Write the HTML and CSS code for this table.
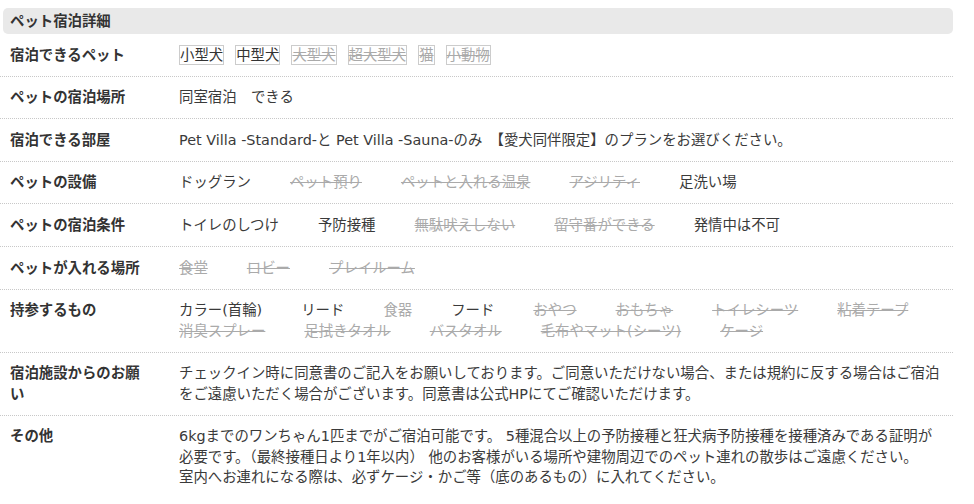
FILE: index.html
```html
<!DOCTYPE html>
<html lang="ja">
<head>
    <meta charset="UTF-8">
    <meta name="viewport" content="width=device-width, initial-scale=1.0">
    <title>ペット宿泊詳細</title>
    <link rel="stylesheet" href="styles.css">
</head>
<body>
    <div class="pet-detail">
        <h3 class="pet-title">ペット宿泊詳細</h3>

        <div class="pet-row">
            <div class="pet-label">宿泊できるペット</div>
            <div class="pet-value tags">
                <span class="tag">小型犬</span>
                <span class="tag">中型犬</span>
                <span class="tag off">大型犬</span>
                <span class="tag off">超大型犬</span>
                <span class="tag off">猫</span>
                <span class="tag off">小動物</span>
            </div>
        </div>

        <div class="pet-row">
            <div class="pet-label">ペットの宿泊場所</div>
            <div class="pet-value">同室宿泊　できる</div>
        </div>

        <div class="pet-row">
            <div class="pet-label">宿泊できる部屋</div>
            <div class="pet-value">Pet Villa -Standard-と Pet Villa -Sauna-のみ　【愛犬同伴限定】のプランをお選びください。</div>
        </div>

        <div class="pet-row">
            <div class="pet-label">ペットの設備</div>
            <div class="pet-value items">
                <span>ドッグラン</span>
                <span class="off">ペット預り</span>
                <span class="off">ペットと入れる温泉</span>
                <span class="off">アジリティ</span>
                <span>足洗い場</span>
            </div>
        </div>

        <div class="pet-row">
            <div class="pet-label">ペットの宿泊条件</div>
            <div class="pet-value items">
                <span>トイレのしつけ</span>
                <span>予防接種</span>
                <span class="off">無駄吠えしない</span>
                <span class="off">留守番ができる</span>
                <span>発情中は不可</span>
            </div>
        </div>

        <div class="pet-row">
            <div class="pet-label">ペットが入れる場所</div>
            <div class="pet-value items">
                <span class="off">食堂</span>
                <span class="off">ロビー</span>
                <span class="off">プレイルーム</span>
            </div>
        </div>

        <div class="pet-row">
            <div class="pet-label">持参するもの</div>
            <div class="pet-value items">
                <span>カラー(首輪)</span>
                <span>リード</span>
                <span class="off-plain">食器</span>
                <span>フード</span>
                <span class="off">おやつ</span>
                <span class="off">おもちゃ</span>
                <span class="off">トイレシーツ</span>
                <span class="off">粘着テープ</span>
                <span class="off">消臭スプレー</span>
                <span class="off">足拭きタオル</span>
                <span class="off">バスタオル</span>
                <span class="off">毛布やマット(シーツ)</span>
                <span class="off">ケージ</span>
            </div>
        </div>

        <div class="pet-row">
            <div class="pet-label">宿泊施設からのお願い</div>
            <div class="pet-value">チェックイン時に同意書のご記入をお願いしております。ご同意いただけない場合、または規約に反する場合はご宿泊をご遠慮いただく場合がございます。同意書は公式HPにてご確認いただけます。</div>
        </div>

        <div class="pet-row last">
            <div class="pet-label">その他</div>
            <div class="pet-value">6kgまでのワンちゃん1匹までがご宿泊可能です。 5種混合以上の予防接種と狂犬病予防接種を接種済みである証明が<br>必要です。（最終接種日より1年以内） 他のお客様がいる場所や建物周辺でのペット連れの散歩はご遠慮ください。<br>室内へお連れになる際は、必ずケージ・かご等（底のあるもの）に入れてください。</div>
        </div>
    </div>
</body>
</html>
```

FILE: styles.css
```css
body {
  margin: 0;
  padding-top: 8px;
  font-family: "DejaVu Sans", "Noto Sans CJK JP", sans-serif;
  font-size: 14.4px;
  color: #3a3a3a;
  background: #fff;
}
.pet-detail {
  width: 953px;
}
.pet-title {
  margin: 0 0 0 3px;
  height: 26px;
  line-height: 26px;
  padding-left: 7px;
  background-color: #e9e9e9;
  border-radius: 5px;
  font-size: 14.4px;
  font-weight: bold;
  color: #333;
}
.pet-row {
  display: grid;
  grid-template-columns: 169px 1fr;
  padding: 10.6px 5px 10.6px 10px;
  line-height: 20.4px;
  border-bottom: 1px dotted #c8c8c8;
}
.pet-row.last {
  border-bottom: none;
}
.pet-label {
  padding-right: 30px;
  font-weight: bold;
  color: #333;
}
.tags {
  display: flex;
  gap: 11px;
  align-items: center;
}
.tag {
  border: 1px solid #ccc;
  line-height: 18px;
  color: #333;
}
.items {
  display: flex;
  flex-wrap: wrap;
  column-gap: 39px;
}
.off {
  color: #aaa;
  text-decoration: line-through;
}
.off-plain {
  color: #aaa;
}
```
